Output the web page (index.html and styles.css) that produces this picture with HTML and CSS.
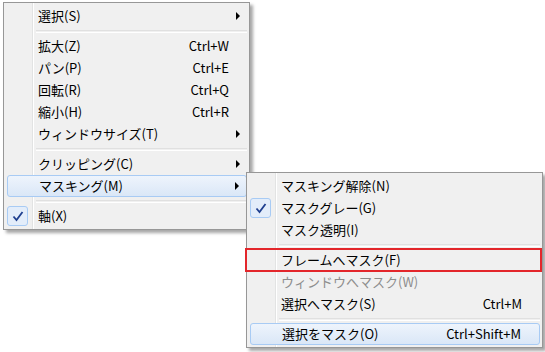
FILE: index.html
```html
<!DOCTYPE html>
<html lang="ja">
<head>
  <meta charset="UTF-8" />
  <title>Context Menu</title>
  <link rel="stylesheet" href="styles.css">
</head>
<body>
  <div class="stage">
    <!-- main menu -->
    <div class="menu main-menu">
      <div class="item"><span class="label">選択(S)</span><span class="arrow"></span></div>
      <div class="sep"></div>
      <div class="item"><span class="label">拡大(Z)</span><span class="key">Ctrl+W</span><span class="arrow none"></span></div>
      <div class="item"><span class="label">パン(P)</span><span class="key">Ctrl+E</span><span class="arrow none"></span></div>
      <div class="item"><span class="label">回転(R)</span><span class="key">Ctrl+Q</span><span class="arrow none"></span></div>
      <div class="item"><span class="label">縮小(H)</span><span class="key">Ctrl+R</span><span class="arrow none"></span></div>
      <div class="item"><span class="label">ウィンドウサイズ(T)</span><span class="arrow"></span></div>
      <div class="sep"></div>
      <div class="item"><span class="label">クリッピング(C)</span><span class="arrow"></span></div>
      <div class="item hot"><span class="label">マスキング(M)</span><span class="arrow"></span></div>
      <div class="sep"></div>
      <div class="item checked">
        <span class="check"><svg width="12" height="11" viewBox="0 0 12 11"><path d="M1.5 5.5 L4.5 9 L10.5 1" fill="none" stroke="#1f3f8f" stroke-width="1.8"/></svg></span>
        <span class="label">軸(X)</span><span class="arrow none"></span>
      </div>
    </div>

    <!-- submenu -->
    <div class="menu sub-menu">
      <div class="item"><span class="label">マスキング解除(N)</span><span class="arrow none"></span></div>
      <div class="item checked">
        <span class="check"><svg width="12" height="11" viewBox="0 0 12 11"><path d="M1.5 5.5 L4.5 9 L10.5 1" fill="none" stroke="#1f3f8f" stroke-width="1.8"/></svg></span>
        <span class="label">マスクグレー(G)</span><span class="arrow none"></span>
      </div>
      <div class="item"><span class="label">マスク透明(I)</span><span class="arrow none"></span></div>
      <div class="sep"></div>
      <div class="item marked"><span class="label">フレームへマスク(F)</span><span class="arrow none"></span></div>
      <div class="item disabled"><span class="label">ウィンドウへマスク(W)</span><span class="arrow none"></span></div>
      <div class="item"><span class="label">選択へマスク(S)</span><span class="key">Ctrl+M</span><span class="arrow none"></span></div>
      <div class="sep"></div>
      <div class="item hot"><span class="label">選択をマスク(O)</span><span class="key">Ctrl+Shift+M</span><span class="arrow none"></span></div>
    </div>
  </div>
</body>
</html>
```

FILE: styles.css
```css
body {
  margin: 0;
  background: #fff;
  font-family: "Noto Sans CJK JP", "Noto Sans", sans-serif;
  font-size: 13px;
  color: #000;
}
.stage {
  position: relative;
  width: 545px;
  height: 352px;
}
.menu {
  position: absolute;
  border: 1px solid #979797;
  padding: 2px;
  background: linear-gradient(to right, #f0f0f0 28px, #e2e3e3 28px, #e2e3e3 29px, #fff 29px, #fff 30px, #f0f0f0 30px);
  box-shadow: 3px 3px 3px rgba(0, 0, 0, 0.35);
}
.main-menu {
  left: 3px;
  top: 2px;
  width: 241px;
}
.sub-menu {
  left: 246px;
  top: 172px;
  width: 291px;
}
.item {
  position: relative;
  display: flex;
  align-items: center;
  height: 22px;
  line-height: 22px;
  white-space: nowrap;
}
.label {
  padding-left: 32px;
}
.key {
  margin-left: auto;
  padding-right: 0;
}
.arrow {
  margin-left: auto;
  width: 18px;
  height: 22px;
  flex-shrink: 0;
  position: relative;
}
.key + .arrow {
  margin-left: 0;
}
.arrow::after {
  content: "";
  position: absolute;
  left: 7px;
  top: 7px;
  border-left: 4px solid #000;
  border-top: 4px solid transparent;
  border-bottom: 4px solid transparent;
}
.arrow.none::after {
  display: none;
}
.hot {
  border: 1px solid #a8cbf4;
  border-radius: 3px;
  background: linear-gradient(#eef4fc, #dae7f7);
  height: 20px;
  margin: 0 0 0 1px;
}
.hot .label {
  padding-left: 31px;
}
.checked .check {
  position: absolute;
  left: 1px;
  top: 1px;
  width: 19px;
  height: 18px;
  border: 1px solid #a8cbf4;
  border-radius: 3px;
  background: #e3edfa;
  display: flex;
  align-items: center;
  justify-content: center;
}
.disabled {
  color: #8d8d8d;
}
.marked::after {
  content: "";
  position: absolute;
  left: -4px;
  right: -2px;
  top: -1px;
  bottom: -1px;
  border: 2px solid #e3262b;
}
.sep {
  height: 1px;
  margin: 3px 0 2px 30px;
  border-top: 1px solid #e0e0e0;
  border-bottom: 1px solid #fff;
}
```
